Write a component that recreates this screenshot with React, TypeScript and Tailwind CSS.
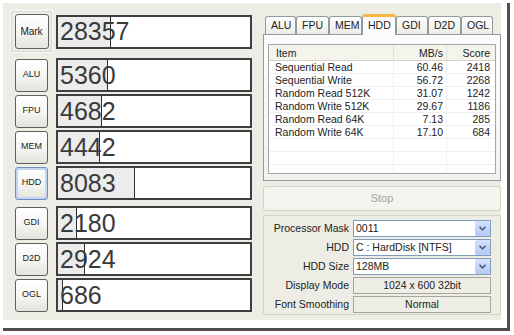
import type { ReactNode } from 'react'

const FONT = { fontFamily: '"Liberation Sans", Arial, sans-serif' }

const GROUP_A = [
  { label: 'ALU', score: 5360, fill: 50 },
  { label: 'FPU', score: 4682, fill: 44 },
  { label: 'MEM', score: 4442, fill: 42 },
  { label: 'HDD', score: 8083, fill: 77, focus: true },
]

const GROUP_B = [
  { label: 'GDI', score: 2180, fill: 19 },
  { label: 'D2D', score: 2924, fill: 27 },
  { label: 'OGL', score: 686, fill: 5 },
]

const TABS = [
  { label: 'ALU', w: 31 },
  { label: 'FPU', w: 33 },
  { label: 'MEM', w: 33 },
  { label: 'HDD', w: 34, active: true },
  { label: 'GDI', w: 32 },
  { label: 'D2D', w: 33 },
  { label: 'OGL', w: 32 },
]

const RESULTS = [
  ['Sequential Read', '60.46', '2418'],
  ['Sequential Write', '56.72', '2268'],
  ['Random Read 512K', '31.07', '1242'],
  ['Random Write 512K', '29.67', '1186'],
  ['Random Read 64K', '7.13', '285'],
  ['Random Write 64K', '17.10', '684'],
]

function XpButton({ label, focus, big }: { label: string; focus?: boolean; big?: boolean }) {
  return (
    <div
      className={`flex items-center justify-center rounded-[3px] border bg-gradient-to-b from-white via-[#f6f6f3] to-[#e4e3dc] text-[#222] ${
        focus ? 'border-[#6d8fc4] shadow-[inset_0_0_0_2px_#c2d5f5]' : 'border-[#5f5f5f]'
      } ${big ? 'w-[34px] h-[35px] text-[10px]' : 'w-[33px] h-[33px] text-[9px]'}`}
    >
      {label}
    </div>
  )
}

function ScoreBox({ score, fill }: { score: number; fill: number }) {
  return (
    <div className="relative w-[196px] h-[34px] border-2 border-[#3e3e3e] bg-white flex items-center">
      <div
        className="absolute left-0 top-0 bottom-0 bg-[#ececec] border-r border-[#2e2e2e]"
        style={{ width: fill }}
      />
      <span className="relative pl-[2px] text-[25px] leading-none text-[#3a3a3a]">{score}</span>
    </div>
  )
}

function ScoreRow({ label, score, fill, focus }: { label: string; score: number; fill: number; focus?: boolean }) {
  return (
    <div className="flex items-center h-[34px]">
      <div className="w-[46px] pl-[5px]">
        <XpButton label={label} focus={focus} />
      </div>
      <ScoreBox score={score} fill={fill} />
    </div>
  )
}

function Combo({ value }: { value: string }) {
  return (
    <div className="flex h-[17px] w-[138px] border border-[#7f9db9] bg-white">
      <span className="flex-1 pl-[2px] text-[10.5px] leading-[15px] text-[#222]">{value}</span>
      <div className="w-[15px] h-[15px] rounded-[2px] bg-gradient-to-b from-[#d6e2fc] to-[#b2c8f7] flex items-center justify-center">
        <svg width="7" height="5" viewBox="0 0 7 5">
          <path d="M0.5 0.8 L3.5 3.8 L6.5 0.8" fill="none" stroke="#4d6185" strokeWidth="1.6" />
        </svg>
      </div>
    </div>
  )
}

function StaticField({ value }: { value: string }) {
  return (
    <div className="h-[17px] w-[138px] border border-[#a7a69a] bg-[#efeee6] text-center text-[10.5px] leading-[15px] text-[#222]">
      {value}
    </div>
  )
}

function SettingRow({ label, children }: { label: string; children: ReactNode }) {
  return (
    <div className="flex items-center h-[17px]">
      <span className="w-[89px] pr-[4px] text-right text-[10.5px] text-[#222]">{label}</span>
      {children}
    </div>
  )
}

export default function App() {
  return (
    <div className="w-[514px] h-[335px] bg-white pt-[3px] pl-[3px] overflow-hidden" style={FONT}>
      <div className="w-[507px] h-[328px] border-r-[3px] border-b-[3px] border-[#4e4e4e] bg-white">
        <div className="w-[498px] h-[317px] bg-[#eeede5] flex pt-[7px] pl-[7px]">
          {/* left: scores */}
          <div className="w-[243px] flex flex-col">
            <div className="flex items-center">
              <div className="w-[43px] h-[43px] border border-[#fbfbf8] shadow-[inset_0_0_0_1px_#d9d8ce] flex items-center justify-center">
                <XpButton label="Mark" big />
              </div>
              <div className="ml-[3px]">
                <ScoreBox score={28357} fill={53} />
              </div>
            </div>
            <div className="mt-[5px] flex flex-col gap-[2px]">
              {GROUP_A.map(r => (
                <ScoreRow key={r.label} {...r} />
              ))}
            </div>
            <div className="mt-[6px] flex flex-col gap-[2px]">
              {GROUP_B.map(r => (
                <ScoreRow key={r.label} {...r} />
              ))}
            </div>
          </div>

          {/* right: detail panel */}
          <div className="ml-[10px] w-[238px] flex flex-col">
            {/* tabs */}
            <div className="flex items-end h-[24px] pl-[2px]">
              {TABS.map(t => (
                <div
                  key={t.label}
                  style={{ width: t.w }}
                  className={
                    t.active
                      ? 'relative z-10 -mb-px h-[21px] border border-b-0 border-[#919b9c] border-t-[3px] border-t-[#f7b83d] rounded-t-[3px] bg-[#fcfcfe] text-[10.5px] pl-[5px] leading-[16px] text-[#222]'
                      : 'h-[18px] border border-b-0 border-[#919b9c] rounded-t-[3px] bg-gradient-to-b from-white to-[#ecebe6] text-[10.5px] pl-[5px] leading-[17px] text-[#222]'
                  }
                >
                  {t.label}
                </div>
              ))}
            </div>
            <div className="h-[147px] border border-[#919b9c] bg-gradient-to-b from-[#fcfcfe] to-[#f3f2ec] px-[4px] pt-[9px]">
              <div className="h-[130px] border border-[#a5a5a5] bg-white overflow-hidden text-[10.5px] text-[#222]">
                <div className="flex h-[16px] bg-[#f4f3ec] border-b border-[#d6d2c2] leading-[16px]">
                  <span className="w-[125px] pl-[7px] border-r border-[#e2e0d4]">Item</span>
                  <span className="w-[53px] pr-[3px] text-right border-r border-[#e2e0d4]">MB/s</span>
                  <span className="flex-1 pr-[5px] text-right">Score</span>
                </div>
                {Array.from({ length: 9 }).map((_, i) => {
                  const row = RESULTS[i] ?? ['', '', '']
                  return (
                    <div key={i} className="flex h-[13px] leading-[13px] border-b border-[#efefef]">
                      <span className="w-[125px] pl-[6px] border-r border-[#efefef]">{row[0]}</span>
                      <span className="w-[53px] pr-[3px] text-right border-r border-[#efefef]">{row[1]}</span>
                      <span className="flex-1 pr-[5px] text-right">{row[2]}</span>
                    </div>
                  )
                })}
              </div>
            </div>

            {/* stop button */}
            <div className="mt-[5px] h-[25px] rounded-[3px] border border-[#d3d2c6] bg-[#f4f3ee] flex items-center justify-center text-[11px] text-[#a5a59b]">
              Stop
            </div>

            {/* settings */}
            <div className="mt-[4px] h-[100px] rounded-[2px] border border-[#d3d2c6] pt-[4px] flex flex-col gap-[2px]">
              <SettingRow label="Processor Mask">
                <Combo value="0011" />
              </SettingRow>
              <SettingRow label="HDD">
                <Combo value="C : HardDisk [NTFS]" />
              </SettingRow>
              <SettingRow label="HDD Size">
                <Combo value="128MB" />
              </SettingRow>
              <SettingRow label="Display Mode">
                <StaticField value="1024 x 600 32bit" />
              </SettingRow>
              <SettingRow label="Font Smoothing">
                <StaticField value="Normal" />
              </SettingRow>
            </div>
          </div>
        </div>
      </div>
    </div>
  )
}
